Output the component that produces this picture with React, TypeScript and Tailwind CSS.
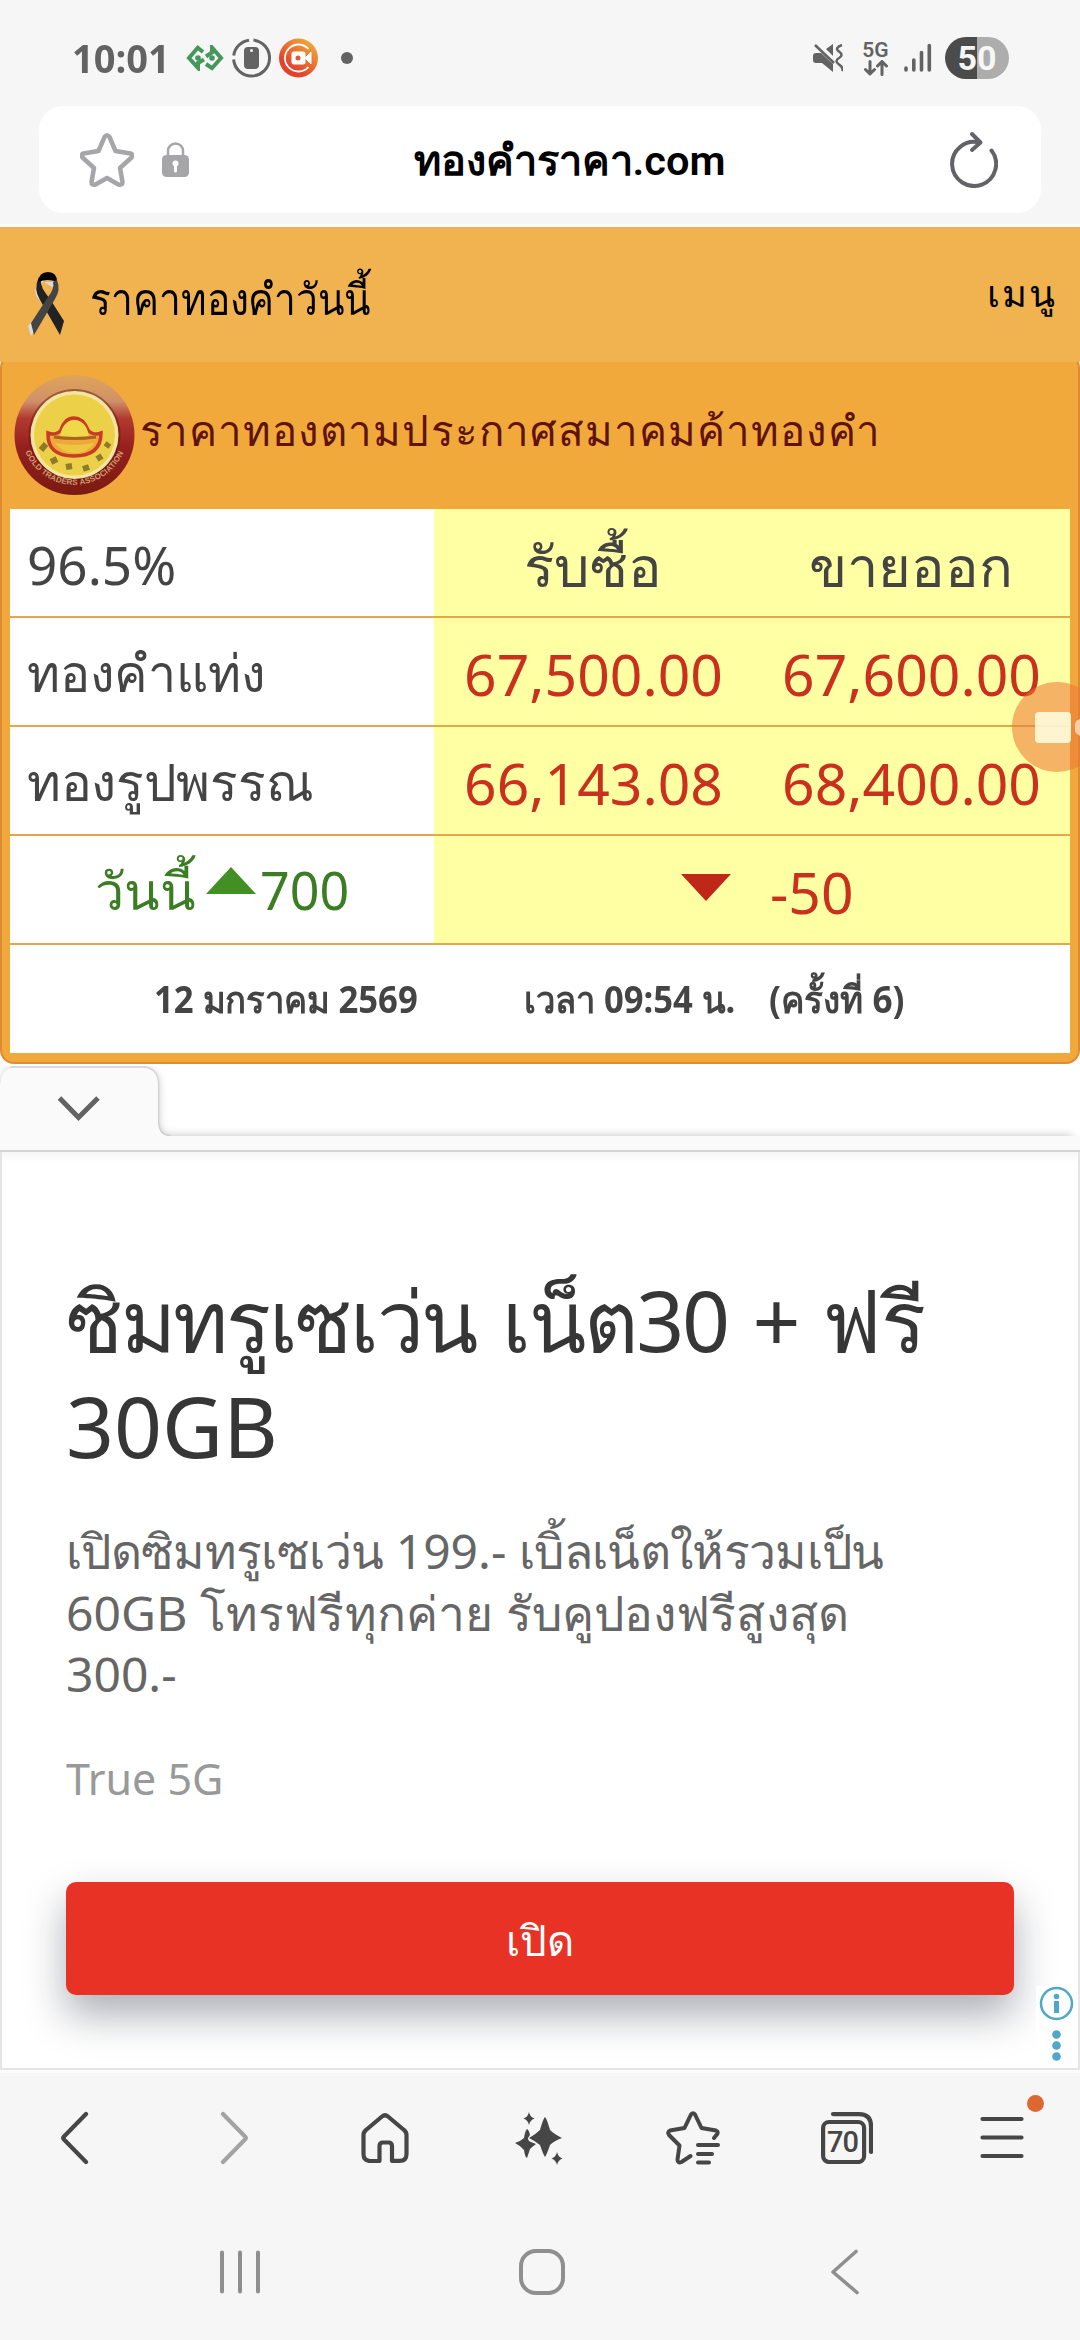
import type { ReactNode } from "react";

const prices = [
  { name: "ทองคำแท่ง", scale: "scale-x-[0.965]", buy: "67,500.00", sell: "67,600.00" },
  { name: "ทองรูปพรรณ", scale: "scale-x-[0.99]", buy: "66,143.08", sell: "68,400.00" },
];

const StatusBar = () => {
  return (
    <div className="flex h-[106px] items-start justify-between pl-[72px] pr-[71px] pt-[37px] text-[#636363]">
      <div className="flex h-[42px] items-center">
        <span className="w-[114px] origin-left scale-x-[0.95] whitespace-nowrap font-['Open_Sans'] text-[40px] font-bold leading-none">10:01</span>
        <svg width="38" height="26" viewBox="0 0 38 26" fill="none" stroke="#45985a" strokeWidth="4">
          <path d="m17 7-5.200-4.200L3 13l9 10v-5l6-3.500" />
          <path d="m20 19 6 4.200L35 13 26 2.500v5l-6 4" />
          <circle cx="12" cy="13" r="2.800" fill="#45985a" stroke="none" />
          <circle cx="26" cy="13" r="2.800" fill="#45985a" stroke="none" />
        </svg>
        <svg width="39" height="40" viewBox="0 0 39 40" fill="none" className="ml-2">
          <path d="M21.500 2.100a18 18 0 1 1-19.900 19.400M1.700 17.500A18 18 0 0 1 17 2.200" stroke="#636363" strokeWidth="3" />
          <rect x="12" y="9" width="15" height="22" rx="4" fill="#636363" />
          <circle cx="19.500" cy="12.500" r="1.500" fill="#f5f5f5" />
        </svg>
        <svg width="39" height="40" viewBox="0 0 39 40" fill="none" className="ml-2">
          <defs>
            <linearGradient id="rec" x1="0.2" y1="0.9" x2="0.8" y2="0.1">
              <stop offset="0.2" stopColor="#e3422c" />
              <stop offset="1" stopColor="#efa53a" />
            </linearGradient>
          </defs>
          <circle cx="19.500" cy="20" r="19.500" fill="url(#rec)" />
          <path d="M29.500 11a13.500 13.500 0 1 0 0 18" stroke="#fff" strokeWidth="1.800" />
          <rect x="12.500" y="13.500" width="14" height="13" rx="2.500" fill="#fff" />
          <path d="m26 20 6-6v12z" fill="#fff" stroke="#fff" strokeLinejoin="round" />
          <circle cx="19" cy="20" r="2.500" fill="#e3582c" />
        </svg>
        <span className="ml-[23px] size-3 rounded-full bg-[#636363]" />
      </div>
      <div className="flex h-[42px] items-center">
        <svg width="30" height="30" viewBox="0 0 30 30" fill="#636363">
          <path d="M0 13q0-3 3-3h5L20 21v8L9 20H3q-3 0-3-3z" />
          <path d="M20 1v12l-7-7z" />
          <path d="m2 2 19 18" stroke="#636363" strokeWidth="2.500" />
          <path d="M29 2q-8 3-3 6.500t0 6.500 0 6.500 3 6.500" fill="none" stroke="#636363" strokeWidth="2.500" />
        </svg>
        <div className="ml-[19px] flex w-[27px] flex-col items-center">
          <span className="h-[19px] font-['Roboto'] text-[21px] font-semibold leading-[19px]">5G</span>
          <svg width="24" height="16" viewBox="0 0 24 16" fill="none" stroke="#636363" strokeWidth="3" strokeLinecap="round" strokeLinejoin="round">
            <path d="M6 1.500v12m-4.500-4 4.500 4.500 4.500-4.500M18 14.500V2m-4.500 4L18 1.500 22.500 6" />
          </svg>
        </div>
        <svg width="28" height="30" viewBox="0 0 28 30" stroke="#636363" strokeWidth="3.600" strokeLinecap="round" className="ml-[15px]">
          <path d="M2 25v2M9.800 17v10" />
          <path d="M17.500 9.500V27M25.300 2.500V27" />
        </svg>
        <div className="ml-[13px] flex h-[42px] w-[64px] items-center justify-center rounded-full bg-linear-to-r from-[#4b4b4b] from-50% to-[#adadad] to-50% font-['Roboto'] text-[34px] font-bold leading-none text-[#f6f6f6]">
          50
        </div>
      </div>
    </div>
  );
};

const AddressBar = () => {
  return (
    <div className="mx-[39px] flex h-[107px] items-center rounded-[24px] bg-white pl-[41px] pr-[43px]">
      <svg width="54" height="54" viewBox="0 0 54 54" fill="none" stroke="#a6a6a8" strokeWidth="4.500" strokeLinejoin="round">
        <path d="M24.500 4q2.500-3.500 5 0l6 14 15 2.500q3 1 1 4L40 35l2.500 14q0 3.500-4 2.500L27 45l-11.500 6.500q-4 1-4-2.500L14 35 2.500 24.500q-2-3 1-4l15-2.500z" />
      </svg>
      <svg width="27" height="36" viewBox="0 0 27 36" fill="none" className="ml-[28px] mt-px">
        <path d="M6 15V9a7.500 7.500 0 0 1 15 0v6" stroke="#a6a6a8" strokeWidth="2.500" />
        <rect y="13" width="27" height="22" rx="4.500" fill="#a6a6a8" />
        <circle cx="13.500" cy="21.500" r="3" fill="#fff" />
        <path d="M13.500 22v7" stroke="#fff" strokeWidth="3" strokeLinecap="round" />
      </svg>
      <div className="flex-1 whitespace-nowrap pt-[2px] text-center font-['Roboto','Noto_Sans',sans-serif] text-[41.500px] font-semibold leading-[60px] text-black">ทองคำราคา.com</div>
      <svg width="48" height="57" viewBox="0 0 48 57" fill="none" stroke="#636367" strokeWidth="4" strokeLinecap="round" strokeLinejoin="round">
        <path d="M41.500 19.500A22 22 0 1 1 29 11.500" />
        <path d="m22 3 8.500 8.500L22 19" />
      </svg>
    </div>
  );
};

const SiteHeader = () => {
  return (
    <div className="relative z-10 flex h-[135px] items-start justify-between bg-[#f0b350] pl-[28px] pr-[23px] font-['Noto_Sans',sans-serif] text-black">
      <div className="flex items-start">
        <svg width="38" height="66" viewBox="0 0 38 66" className="mt-[44px]">
          <path d="M11 8Q5 20 9 26l7 9L0 55l3 10 16-24 2-3L13 20q-2-5 2-9h10l4 8z" fill="#dcdcdc" />
          <path d="M11 6Q5 18 12 29l20 35 4-14-14-22Q12 16 13 10z" fill="#222" />
          <path d="M10 11Q11 1 20 1t9 10q-9-4-19 0z" fill="#000" />
          <path d="M29 9q4 10-2 19L6 64 3 52l17-26q7-9 5-15z" fill="#444" />
        </svg>
        <span className="ml-[24px] mt-[42px] origin-left scale-x-[0.883] whitespace-nowrap text-[44px] leading-[58px]">ราคาทองคำวันนี้</span>
      </div>
      <span className="mt-[35px] text-[38px] leading-[60px] tracking-[2px]">เมนู</span>
    </div>
  );
};

const AssociationLogo = () => {
  return (
    <svg width="130" height="136" viewBox="0 0 130 136">
      <defs>
        <linearGradient id="ring" x1="0" y1="0" x2="0" y2="1">
          <stop offset="0" stopColor="#e0a558" />
          <stop offset="0.22" stopColor="#cf9068" />
          <stop offset="0.36" stopColor="#b23a30" />
          <stop offset="0.6" stopColor="#96201d" />
          <stop offset="1" stopColor="#7a1a12" />
        </linearGradient>
        <path id="arc" d="M14 84a53 53 0 0 0 101 0" />
      </defs>
      <circle cx="64.500" cy="71" r="60" fill="url(#ring)" />
      <circle cx="64.500" cy="71" r="46" fill="#5f1711" opacity="0.500" />
      <circle cx="64.500" cy="71" r="44" fill="#f5e3a0" />
      <circle cx="64.500" cy="71" r="40.500" fill="#ecd048" />
      <text className="font-['Liberation_Sans'] text-[8px] font-bold" fill="#cf9a70">
        <textPath href="#arc" startOffset="4" textLength="125">GOLD TRADERS ASSOCIATION</textPath>
      </text>
      <path d="M38 69q8 3 13-3 4-12 13-12t14 12q5 6 13 3 0 23-27 23T38 69z" fill="#f0a83a" stroke="#c83b25" strokeWidth="3.500" />
      <path d="M50 75q1-18 14.500-19 13.500 1 14.500 19z" fill="#efd84a" />
      <path d="M45 79q19 4 39 0-6 10-19 10t-20-10z" fill="#ecc840" />
      <path d="M44 73q20 3 42 0" stroke="#a8641f" strokeWidth="3" fill="none" />
      <path d="m31 86 5-6m5 18 6-3m9 8 6-1m11 3 6-2m8-8 5-3m4-9 3-4" stroke="#8d7a2a" strokeWidth="6" />
    </svg>
  );
};

const Cell = ({ className, children }: { className?: string; children?: ReactNode }) => {
  return <div className={`flex items-center whitespace-nowrap ${className ?? ""}`}>{children}</div>;
};

const PriceTable = () => {
  return (
    <div className="-mt-2 h-[710px] overflow-hidden rounded-[14px] border-2 border-[#dd8c34] bg-[#f1a93b] px-2 pt-2 font-['Noto_Sans',sans-serif] text-[#444]">
      <div className="flex h-[145px] items-start">
        <AssociationLogo />
        <h1 className="mt-[36px] whitespace-nowrap text-[42px] leading-[60px] tracking-[1.050px] text-[#60120c]">
          ราคาทองตามประกาศสมาคมค้าทองคำ
        </h1>
      </div>
      <div className="grid grid-cols-[424px_318px_318px] grid-rows-[109px_109px_109px_109px_108px] bg-white text-[52px] leading-none">
        <Cell className="border-b-2 border-[#e5a848] pl-[17px] pt-[3px] text-[53px]">96.5%</Cell>
        <Cell className="justify-center border-b-2 border-[#e5a848] bg-[#ffffa3] pt-[5px] text-[56px]">รับซื้อ</Cell>
        <Cell className="justify-center border-b-2 border-[#e5a848] bg-[#ffffa3] pt-[5px] text-[56px]">ขายออก</Cell>
        {prices.map((row) => (
          <div key={row.name} className="contents">
            <Cell className="border-b-2 border-[#e5a848] pl-[17px]">
              <span className={`origin-left ${row.scale}`}>{row.name}</span>
            </Cell>
            <Cell className="justify-center border-b-2 border-[#e5a848] bg-[#ffffa3] pl-px pt-[6px] text-[57px] text-[#cb301e]">{row.buy}</Cell>
            <Cell className="justify-center border-b-2 border-[#e5a848] bg-[#ffffa3] pl-px pt-[6px] text-[57px] text-[#cb301e]">{row.sell}</Cell>
          </div>
        ))}
        <Cell className="border-b-2 border-[#e5a848] pl-[85px] text-[#3b7d23]">
          วันนี้
          <svg width="50" height="27" viewBox="0 0 50 27" className="mb-[18px] ml-[10px] mr-[4px]">
            <path d="M0 27 25 0l25 27z" fill="#429024" />
          </svg>
          700
        </Cell>
        <Cell className="col-span-2 border-b-2 border-[#e5a848] bg-[#ffffa3] pl-[247px] pt-[6px] text-[57px] text-[#cb301e]">
          <svg width="50" height="27" viewBox="0 0 50 27" className="mb-[11px] mr-[39px]">
            <path d="M0 0h50L25 27z" fill="#bf2718" />
          </svg>
          -50
        </Cell>
        <Cell className="col-span-3 pb-[2px] pl-[144px] text-[38px] font-bold">
          <span className="w-[370px] origin-left scale-x-[0.912]">12 มกราคม 2569</span>
          <span className="w-[245px] origin-left scale-x-[0.91]">เวลา 09:54 น.</span>
          <span className="origin-left scale-x-[0.926]">(ครั้งที่ 6)</span>
        </Cell>
      </div>
    </div>
  );
};

const AdHandle = () => {
  return (
    <svg width="1080" height="88" viewBox="0 0 1080 88" className="block bg-white">
      <defs>
        <filter id="soft" x="-10%" y="-50%" width="120%" height="200%">
          <feGaussianBlur stdDeviation="5" />
        </filter>
        <filter id="tight" x="-10%" y="-50%" width="120%" height="200%">
          <feGaussianBlur stdDeviation="1.2" />
        </filter>
        <clipPath id="below">
          <path d="M0 2h1080v86H0z" />
        </clipPath>
      </defs>
      <g clipPath="url(#below)">
        <path d="M8 5h133q17 0 17 17v34q0 16 12 16h902v30H0V20z" fill="#000" opacity="0.25" filter="url(#soft)" />
        <path d="M12 3h129q17 0 17 17v36q0 16 12 16v20H0V20z" fill="#000" opacity="0.25" filter="url(#tight)" />
      </g>
      <path d="M0 20Q2 3.500 15 3.500h126q17 0 17 17V56q0 16 12 16h910v14H0z" fill="#fafafa" />
      <path d="M0 87h1080" stroke="#d3d3d3" strokeWidth="2" />
      <path d="m59.500 34 19 19.500L98 34" fill="none" stroke="#636363" strokeWidth="5" />
    </svg>
  );
};

const Ad = () => {
  return (
    <div className="relative h-[918px] border-x-2 border-b-2 border-[#e5e5e5] bg-white bg-linear-to-b from-[#f6f6f6] to-white to-[10px] px-[64px] font-['Noto_Sans',sans-serif]">
      <h2 className="whitespace-nowrap pt-[115px] text-[84px] leading-[106px] text-[#363636]">
        <span className="tracking-[-2.350px]">ซิมทรูเซเว่น</span>
        <span className="ml-[7px] tracking-[-2.350px]"> เน็ต30</span>
        <span className="ml-[3px]"> + ฟรี</span>
        <br />
        30GB
      </h2>
      <p className="mt-[41px] whitespace-nowrap text-[48px] leading-[61.500px] text-[#666]">
        <span className="tracking-[-0.650px]">เปิดซิมทรูเซเว่น</span>
        <span> 199.- </span>
        <span className="tracking-[-0.650px]">เบิ้ลเน็ตให้รวมเป็น</span>
        <br />
        <span className="tracking-[0.100px]">60GB โทรฟรีทุกค่าย รับคูปองฟรีสูงสุด</span>
        <br />
        300.-
      </p>
      <p className="mt-[44px] text-[43px] leading-[60px] text-[#999]">True 5G</p>
      <button className="mt-[73px] block h-[113px] w-[948px] rounded-[10px] bg-[#e83225] pt-[3px] text-[42px] text-white shadow-[0_20px_40px_rgba(20,25,45,0.35)]">
        เปิด
      </button>
      <svg width="44" height="82" viewBox="0 0 44 82" className="absolute bottom-0 right-[-2px] bg-white">
        <circle cx="20.500" cy="17.500" r="15.500" fill="none" stroke="#4fa8c8" strokeWidth="2.500" />
        <circle cx="20.500" cy="10.500" r="2.800" fill="#4fa8c8" />
        <path d="M20.500 15v12" stroke="#4fa8c8" strokeWidth="5" />
        <circle cx="20.500" cy="48.500" r="4.300" fill="#4fa8c8" />
        <circle cx="20.500" cy="59.500" r="4.300" fill="#4fa8c8" />
        <circle cx="20.500" cy="70.500" r="4.300" fill="#4fa8c8" />
        <path d="M43 0v82" stroke="#e5e5e5" strokeWidth="2" />
      </svg>
    </div>
  );
};

const BrowserBar = () => {
  return (
    <div className="relative flex h-[130px] items-center pl-[61px] text-[#464646]">
      <svg width="28" height="54" viewBox="0 0 28 54" fill="none" stroke="#464646" strokeWidth="4.200" strokeLinecap="round" strokeLinejoin="round">
        <path d="M25 3 3 25.500q-1.500 1.500 0 3L25 51" />
      </svg>
      <svg width="28" height="54" viewBox="0 0 28 54" fill="none" stroke="#a3a3a3" strokeWidth="4.200" strokeLinecap="round" strokeLinejoin="round" className="ml-[131px]">
        <path d="m3 3 22 22.500q1.500 1.500 0 3L3 51" />
      </svg>
      <svg width="48" height="50" viewBox="0 0 48 50" fill="none" stroke="#464646" strokeWidth="4.200" strokeLinejoin="round" className="ml-[113px]">
        <path d="M18.500 47.900V33q0-3.500 3.500-3.500h5.500q3.500 0 3.500 3.500v14.900h7.500q7 0 7-7V22q0-3-2.500-5L27 3.500q-3-2.500-6 0L5 17q-2.500 2-2.500 5v19q0 7 7 7z" />
      </svg>
      <svg width="48" height="53" viewBox="0 0 48 53" fill="#464646" className="ml-[106px]">
        <path d="M14 0q1 5 5.500 6.500Q15 8 14 13q-1-5-5.500-6.500Q13 5 14 0z" />
        <path d="M12 17q2 1 3 6l-2 3q0 3 3 4l5 2q-4 3-6 5l-3 9q-2-1-3-8-3-4-9-7 6-2 9-5 1-7 3-9z" />
        <path d="M30 5q2 2 5 13 4 4 12 8-8 3-12 7-3 9-5 12-2-3-5-12-5-4-11-7 7-4 11-8 3-11 5-13z" />
        <path d="M42 40q1 5 5.500 6.500Q43 48 42 53q-1-5-5.500-6.500Q41 45 42 40z" />
      </svg>
      <svg width="54" height="54" viewBox="0 0 54 54" fill="none" stroke="#464646" strokeWidth="4" strokeLinecap="round" strokeLinejoin="round" className="ml-[103px]">
        <path d="M24.500 45l-9 6q-4 1.500-4-2.500l2-14L3 24q-2-3 1-4.500l14.500-2.500L25 3.500q2-2.500 4 0L35.500 17 50 19.500q3.500 1.500 0 5l-2 2.500" />
        <path d="M32 34h20M32 43h14M32 51.500h11" />
      </svg>
      <div className="relative ml-[101px] h-[52px] w-[52px]">
        <svg width="52" height="52" viewBox="0 0 52 52" fill="none" stroke="#464646" strokeWidth="4.200" strokeLinecap="round">
          <rect x="2.100" y="10" width="41" height="40" rx="6" />
          <path d="M12 2.100h26q12 0 12 12V40" />
        </svg>
        <span className="absolute left-[6px] top-[16px] font-['Roboto'] text-[29px] font-medium leading-none tracking-[-1px]">70</span>
      </div>
      <svg width="44" height="44" viewBox="0 0 44 44" stroke="#464646" strokeWidth="4.200" strokeLinecap="round" className="ml-[107px]">
        <path d="M2.500 3h39M2.500 21.500h39M2.500 40h39" />
      </svg>
      <span className="absolute right-[36px] top-[22px] size-[17px] rounded-full bg-[#dd6832]" />
    </div>
  );
};

const SystemBar = () => {
  return (
    <div className="flex items-center pl-[220px] pt-[46px]">
      <svg width="40" height="44" viewBox="0 0 40 44" stroke="#8f8f8f" strokeWidth="4" strokeLinecap="round">
        <path d="M2 2.500v39M20 2.500v39M38 2.500v39" />
      </svg>
      <svg width="46" height="46" viewBox="0 0 46 46" fill="none" stroke="#8f8f8f" strokeWidth="4" className="ml-[259px]">
        <rect x="2" y="2" width="42" height="42" rx="15" />
      </svg>
      <svg width="28" height="46" viewBox="0 0 28 46" fill="none" stroke="#8f8f8f" strokeWidth="3.600" strokeLinecap="round" strokeLinejoin="round" className="ml-[266px]">
        <path d="M25 2.500 2 23l24 20.500" />
      </svg>
    </div>
  );
};

const RecorderBubble = () => {
  return (
    <div className="absolute left-[1012px] top-[682px] h-[90px] w-[68px] overflow-hidden">
      <svg width="68" height="90" viewBox="0 0 68 90">
        <circle cx="45" cy="45" r="45" fill="#ec7535" opacity="0.550" />
        <rect x="23" y="30" width="36" height="31" rx="4" fill="#ffffe2" opacity="0.850" />
        <path d="M68 37q-5 2-5 5v7q0 2 5 5z" fill="#fff0dc" opacity="0.700" />
      </svg>
    </div>
  );
};

const App = () => {
  return (
    <div className="relative h-[2340px] w-[1080px] overflow-hidden bg-[#f6f6f6]">
      <StatusBar />
      <AddressBar />
      <div className="mt-[11px] bg-white pt-[3px]">
        <SiteHeader />
        <PriceTable />
        <AdHandle />
        <Ad />
      </div>
      <div className="border-t-3 border-[#fcfcfc]">
        <BrowserBar />
        <SystemBar />
      </div>
      <RecorderBubble />
    </div>
  );
};

export default App;
